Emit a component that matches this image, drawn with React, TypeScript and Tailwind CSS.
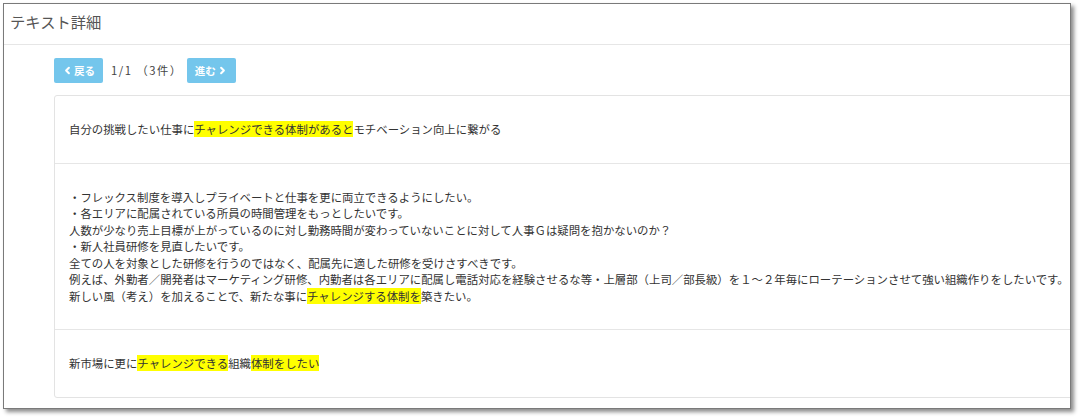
import { ChevronLeft, ChevronRight } from "lucide-react"

type Part = { t: string; hl?: boolean }

const rows: Part[][][] = [
  [[{ t: "自分の挑戦したい仕事に" }, { t: "チャレンジできる体制があると", hl: true }, { t: "モチベーション向上に繋がる" }]],
  [
    [{ t: "・フレックス制度を導入しプライベートと仕事を更に両立できるようにしたい。" }],
    [{ t: "・各エリアに配属されている所員の時間管理をもっとしたいです。" }],
    [{ t: "人数が少なり売上目標が上がっているのに対し勤務時間が変わっていないことに対して人事Ｇは疑問を抱かないのか？" }],
    [{ t: "・新人社員研修を見直したいです。" }],
    [{ t: "全ての人を対象とした研修を行うのではなく、配属先に適した研修を受けさすべきです。" }],
    [
      {
        t: "例えば、外勤者／開発者はマーケティング研修、内勤者は各エリアに配属し電話対応を経験させるな等・上層部（上司／部長級）を１～２年毎にローテーションさせて強い組織作りをしたいです。",
      },
    ],
    [{ t: "新しい風（考え）を加えることで、新たな事に" }, { t: "チャレンジする体制を", hl: true }, { t: "築きたい。" }],
  ],
  [[{ t: "新市場に更に" }, { t: "チャレンジできる", hl: true }, { t: "組織" }, { t: "体制をしたい", hl: true }]],
]

function Line({ parts }: { parts: Part[] }) {
  return (
    <div className="whitespace-nowrap">
      {parts.map((p, i) =>
        p.hl ? (
          <span key={i} className="bg-[#ffff00]">
            {p.t}
          </span>
        ) : (
          <span key={i}>{p.t}</span>
        )
      )}
    </div>
  )
}

function PagerButton({ label, dir }: { label: string; dir: "prev" | "next" }) {
  return (
    <button
      type="button"
      className="flex h-[25px] w-[49px] items-center justify-center gap-[1px] rounded-[2px] bg-[#74c6ec] text-[10.5px] font-bold text-white"
    >
      {dir === "prev" && <ChevronLeft size={11} strokeWidth={4.5} />}
      <span>{label}</span>
      {dir === "next" && <ChevronRight size={11} strokeWidth={4.5} />}
    </button>
  )
}

export default function App() {
  return (
    <div
      className="h-[418px] w-[1080px] overflow-hidden bg-white pl-[3px] pt-[3px] text-[#333]"
      style={{ fontFamily: '"Noto Sans CJK JP", "Noto Sans", sans-serif' }}
    >
      <div className="h-[406px] w-[1068px] overflow-hidden border border-[#7a7a7a] bg-white shadow-[3px_3px_4px_rgba(0,0,0,0.45)]">
        {/* header */}
        <div className="h-[41px] border-b border-[#e6e6e6] pl-[6px] pt-[7px] text-[15.3px] leading-[20px] text-[#555]">
          テキスト詳細
        </div>

        <div className="pl-[50px] pt-[13px]">
          {/* pager */}
          <div className="flex items-center">
            <PagerButton label="戻る" dir="prev" />
            <span className="ml-[8px] mr-[4px] text-[11.3px] tracking-[1.5px] text-[#444]">1/1 （3件）</span>
            <PagerButton label="進む" dir="next" />
          </div>

          {/* list */}
          <div className="mt-[12px] w-[1040px] rounded-[3px] border border-[#e3e3e3] text-[11.4px] leading-[16.5px]">
            {rows.map((lines, i) => (
              <div
                key={i}
                className={`px-[14px] py-[25px] ${i > 0 ? "border-t border-[#e6e6e6]" : ""}`}
              >
                {lines.map((parts, j) => (
                  <Line key={j} parts={parts} />
                ))}
              </div>
            ))}
          </div>
        </div>
      </div>
    </div>
  )
}
